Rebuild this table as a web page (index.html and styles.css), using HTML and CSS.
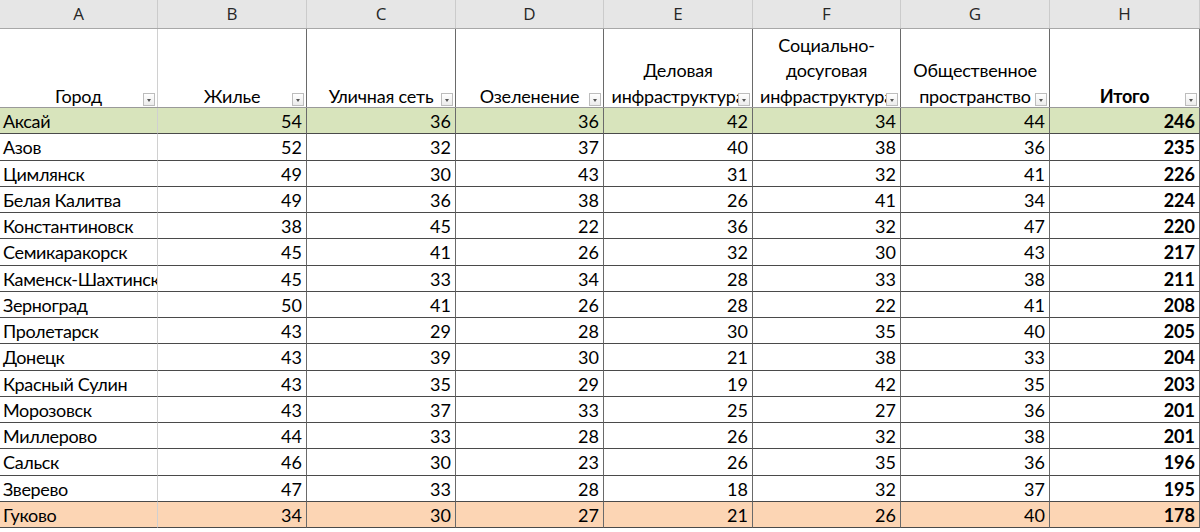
FILE: index.html
```html
<!DOCTYPE html>
<html lang="ru">
<head>
<meta charset="utf-8">
<link rel="stylesheet" href="styles.css">
</head>
<body>
<div class="sheet">
  <div class="row letters">
    <div class="lc">A</div><div class="lc">B</div><div class="lc">C</div><div class="lc">D</div><div class="lc">E</div><div class="lc">F</div><div class="lc">G</div><div class="lc">H</div>
  </div>
  <div class="row head">
    <div class="hc ca"><span>Город</span><i class="flt"></i></div>
    <div class="hc"><span>Жилье</span><i class="flt"></i></div>
    <div class="hc"><span>Уличная сеть</span><i class="flt"></i></div>
    <div class="hc"><span>Озеленение</span><i class="flt"></i></div>
    <div class="hc"><span>Деловая инфраструктура</span><i class="flt"></i></div>
    <div class="hc"><span>Социально-досуговая инфраструктура</span><i class="flt"></i></div>
    <div class="hc"><span>Общественное пространство</span><i class="flt"></i></div>
    <div class="hc"><span class="b">Итого</span><i class="flt"></i></div>
  </div>
  <div class="row data green"><div class="c ca name">Аксай</div><div class="c">54</div><div class="c">36</div><div class="c">36</div><div class="c">42</div><div class="c">34</div><div class="c">44</div><div class="c b">246</div></div>
  <div class="row data"><div class="c ca name">Азов</div><div class="c">52</div><div class="c">32</div><div class="c">37</div><div class="c">40</div><div class="c">38</div><div class="c">36</div><div class="c b">235</div></div>
  <div class="row data"><div class="c ca name">Цимлянск</div><div class="c">49</div><div class="c">30</div><div class="c">43</div><div class="c">31</div><div class="c">32</div><div class="c">41</div><div class="c b">226</div></div>
  <div class="row data"><div class="c ca name">Белая Калитва</div><div class="c">49</div><div class="c">36</div><div class="c">38</div><div class="c">26</div><div class="c">41</div><div class="c">34</div><div class="c b">224</div></div>
  <div class="row data"><div class="c ca name">Константиновск</div><div class="c">38</div><div class="c">45</div><div class="c">22</div><div class="c">36</div><div class="c">32</div><div class="c">47</div><div class="c b">220</div></div>
  <div class="row data"><div class="c ca name">Семикаракорск</div><div class="c">45</div><div class="c">41</div><div class="c">26</div><div class="c">32</div><div class="c">30</div><div class="c">43</div><div class="c b">217</div></div>
  <div class="row data"><div class="c ca name">Каменск-Шахтинск</div><div class="c">45</div><div class="c">33</div><div class="c">34</div><div class="c">28</div><div class="c">33</div><div class="c">38</div><div class="c b">211</div></div>
  <div class="row data"><div class="c ca name">Зерноград</div><div class="c">50</div><div class="c">41</div><div class="c">26</div><div class="c">28</div><div class="c">22</div><div class="c">41</div><div class="c b">208</div></div>
  <div class="row data"><div class="c ca name">Пролетарск</div><div class="c">43</div><div class="c">29</div><div class="c">28</div><div class="c">30</div><div class="c">35</div><div class="c">40</div><div class="c b">205</div></div>
  <div class="row data"><div class="c ca name">Донецк</div><div class="c">43</div><div class="c">39</div><div class="c">30</div><div class="c">21</div><div class="c">38</div><div class="c">33</div><div class="c b">204</div></div>
  <div class="row data"><div class="c ca name">Красный Сулин</div><div class="c">43</div><div class="c">35</div><div class="c">29</div><div class="c">19</div><div class="c">42</div><div class="c">35</div><div class="c b">203</div></div>
  <div class="row data"><div class="c ca name">Морозовск</div><div class="c">43</div><div class="c">37</div><div class="c">33</div><div class="c">25</div><div class="c">27</div><div class="c">36</div><div class="c b">201</div></div>
  <div class="row data"><div class="c ca name">Миллерово</div><div class="c">44</div><div class="c">33</div><div class="c">28</div><div class="c">26</div><div class="c">32</div><div class="c">38</div><div class="c b">201</div></div>
  <div class="row data"><div class="c ca name">Сальск</div><div class="c">46</div><div class="c">30</div><div class="c">23</div><div class="c">26</div><div class="c">35</div><div class="c">36</div><div class="c b">196</div></div>
  <div class="row data"><div class="c ca name">Зверево</div><div class="c">47</div><div class="c">33</div><div class="c">28</div><div class="c">18</div><div class="c">32</div><div class="c">37</div><div class="c b">195</div></div>
  <div class="row data orange"><div class="c ca name">Гуково</div><div class="c">34</div><div class="c">30</div><div class="c">27</div><div class="c">21</div><div class="c">26</div><div class="c">40</div><div class="c b">178</div></div>
</div>
</body>
</html>
```
FILE: styles.css
```css
* { box-sizing: border-box; }
html, body { margin: 0; padding: 0; background: #ffffff; }
body { font-family: Lato, "Open Sans", "Liberation Sans", sans-serif; color: #000; overflow: hidden; }
.sheet { width: 1200px; }
.row {
  display: grid;
  grid-template-columns: 158px 149px 149px 148px 149px 148px 149px 150px;
}
.letters { height: 29px; background: #e6e6e6; border-bottom: 1px solid #a8a8a8; }
.lc {
  border-right: 1px solid #cbcbcb;
  text-align: center;
  font-family: "Open Sans", "Liberation Sans", sans-serif;
  font-size: 17px;
  line-height: 28px;
  color: #262626;
}
.head { height: 79px; border-bottom: 1px solid #9a9a9a; }
.hc {
  position: relative;
  border-right: 1px solid #6a6a6a;
  display: flex;
  align-items: flex-end;
  justify-content: center;
  text-align: center;
  font-size: 18px;
  line-height: 25.5px;
  letter-spacing: -0.2px;
  overflow: hidden;
}
.hc span { display: block; margin-bottom: -2px; }
.hc.ca { border-right-color: #d0d0d0; }
.b { font-weight: 700; }
.flt {
  position: absolute;
  right: 2px;
  bottom: 1px;
  width: 12px;
  height: 13px;
  border: 1px solid #bdbdbd;
  background: linear-gradient(#ffffff, #ececec);
}
.flt::after {
  content: "";
  position: absolute;
  left: 3px;
  top: 5px;
  border-left: 2.5px solid transparent;
  border-right: 2.5px solid transparent;
  border-top: 3px solid #555;
}
.data { height: 26.25px; }
.c {
  border-right: 1px solid #6a6a6a;
  border-bottom: 1px solid #4a4a4a;
  font-size: 18px;
  line-height: 25px;
  text-align: right;
  padding: 1px 4px 0 3px;
  white-space: nowrap;
  overflow: hidden;
}
.c.ca { border-right-color: #d0d0d0; }
.c.name { text-align: left; padding-left: 3px; letter-spacing: -0.35px; }
.green .c { background: #d8e4bc; }
.orange .c { background: #fcd5b4; }
```
